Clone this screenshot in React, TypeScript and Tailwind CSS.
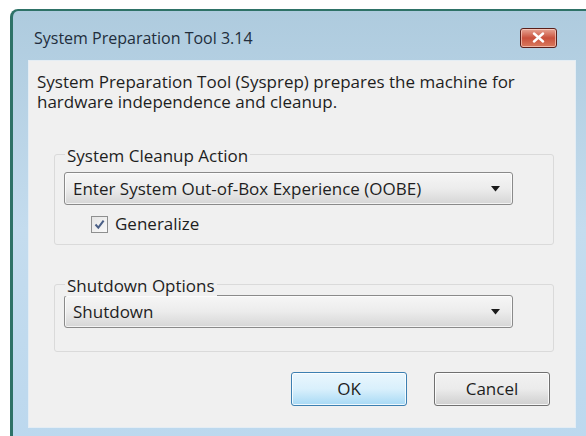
import React from "react";

const font = { fontFamily: '"Open Sans", "Noto Sans", sans-serif' };

function ChevronDown() {
  return (
    <svg width="9" height="6" viewBox="0 0 9 6" className="shrink-0">
      <path d="M0 0 H9 L4.5 5.5 Z" fill="#1a1a1a" />
    </svg>
  );
}

function Select({ value }: { value: string }) {
  return (
    <div className="flex h-[33px] w-[449px] items-center justify-between rounded-[3px] border border-[#8a8a8a] bg-gradient-to-b from-[#f6f6f6] via-[#ececec] to-[#d6d6d6] pl-[8px] pr-[12px] text-[#1e1e1e] shadow-[inset_0_0_0_1px_rgba(255,255,255,0.7)]">
      <span>{value}</span>
      <ChevronDown />
    </div>
  );
}

function GroupBox({
  label,
  className,
  children,
}: {
  label: string;
  className?: string;
  children: React.ReactNode;
}) {
  return (
    <div
      className={`relative ml-[25px] w-[500px] rounded-[3px] border border-[#dadada] pl-[9px] ${className ?? ""}`}
    >
      <span className="absolute -top-[9px] left-[10px] bg-[#f0f0f0] px-[2px] leading-[20px] text-[#1e1e1e]">
        {label}
      </span>
      {children}
    </div>
  );
}

function Checkbox({ label }: { label: string }) {
  return (
    <div className="ml-[27px] mt-[10px] flex items-center gap-[7px]">
      <div className="flex h-[17px] w-[17px] items-center justify-center border border-[#8e8f8f] bg-gradient-to-br from-[#e4e4e4] to-[#fafafa]">
        <svg width="11" height="11" viewBox="0 0 11 11">
          <path
            d="M1.5 5.5 L4.3 8.6 L9.6 1.6"
            fill="none"
            stroke="#4a5f86"
            strokeWidth="2"
          />
        </svg>
      </div>
      <span className="leading-[18px] text-[#1e1e1e]">{label}</span>
    </div>
  );
}

export default function App() {
  return (
    <div
      className="h-[436px] w-[586px] overflow-hidden bg-white pl-[10px] pt-[9px] text-[17px]"
      style={font}
    >
      {/* window frame */}
      <div className="flex h-[440px] w-[590px] flex-col rounded-tl-[8px] border-l-[3px] border-t-[2px] border-[#2e7267] bg-gradient-to-b from-[#aecbde] via-[#c4dcee] to-[#bcd8ee]">
        {/* title bar */}
        <div className="flex h-[49px] shrink-0 items-center justify-between pl-[21px] pr-[43px] pt-[4px]">
          <span className="text-[16px] text-[#222d3c]">System Preparation Tool 3.14</span>
          <div className="flex h-[20px] w-[37px] items-center justify-center rounded-[3px] border border-[#5a1f1a] bg-gradient-to-b from-[#e6a494] via-[#c9503c] to-[#d97a5e] shadow-[inset_0_0_0_1px_rgba(255,220,210,0.6)]">
            <svg width="13" height="11" viewBox="0 0 13 11">
              <path d="M2 1.5 L11 9.5 M11 1.5 L2 9.5" stroke="#ffffff" strokeWidth="2.4" strokeLinecap="round" />
            </svg>
          </div>
        </div>

        {/* client area */}
        <div className="ml-[15px] h-[368px] w-[548px] border border-[#e4edf4] bg-[#f0f0f0] text-[#1e1e1e]">
          <p className="pl-[8px] pr-[8px] pt-[11px] leading-[20px]">
            System Preparation Tool (Sysprep) prepares the machine for
            <br />
            hardware independence and cleanup.
          </p>

          <GroupBox label="System Cleanup Action" className="mt-[42px] h-[91px] pt-[17px]">
            <Select value="Enter System Out-of-Box Experience (OOBE)" />
            <Checkbox label="Generalize" />
          </GroupBox>

          <GroupBox label="Shutdown Options" className="mt-[39px] h-[68px] pt-[10px]">
            <Select value="Shutdown" />
          </GroupBox>

          <div className="mr-[25px] mt-[20px] flex justify-end gap-[27px]">
            <button className="h-[34px] w-[116px] rounded-[3px] border border-[#3c7fb1] bg-gradient-to-b from-[#eaf6fd] via-[#d9f0fc] to-[#a7d9f5] text-[#1e1e1e] shadow-[inset_0_0_0_1px_rgba(255,255,255,0.8)]">
              OK
            </button>
            <button className="h-[34px] w-[116px] rounded-[3px] border border-[#707070] bg-gradient-to-b from-[#f2f2f2] via-[#ebebeb] to-[#cfcfcf] text-[#1e1e1e] shadow-[inset_0_0_0_1px_rgba(255,255,255,0.8)]">
              Cancel
            </button>
          </div>
        </div>
      </div>
    </div>
  );
}
